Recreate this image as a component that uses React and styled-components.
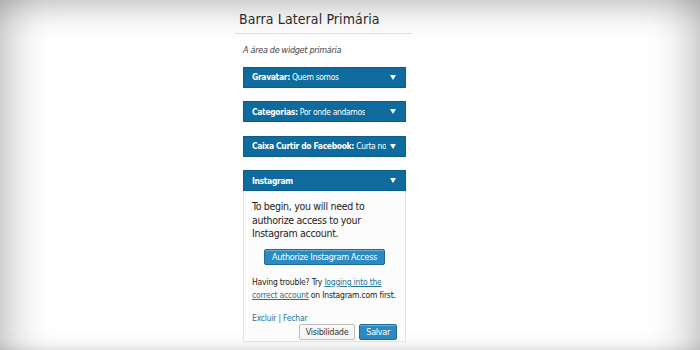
import React from 'react';
import styled, { createGlobalStyle } from 'styled-components';

const GlobalStyle = createGlobalStyle`
    html, body {
        margin: 0;
        padding: 0;
        background: #fff;
    }
    body {
        font-family: "DejaVu Sans Condensed", "DejaVu Sans", sans-serif;
        font-stretch: condensed;
    }
`;

const Page = styled.div`
    width: 700px;
    height: 350px;
    overflow: hidden;
    background: #fff;
    display: flex;
    justify-content: center;
    box-shadow: inset 0 26px 30px -14px rgba(0, 0, 0, 0.18),
        inset 36px 0 40px -24px rgba(0, 0, 0, 0.22),
        inset -36px 0 40px -24px rgba(0, 0, 0, 0.22),
        inset 0 -12px 12px -10px rgba(0, 0, 0, 0.08);
`;

const Sidebar = styled.div`
    width: 177px;
    margin-right: 53px;
    display: flex;
    flex-direction: column;
`;

const SidebarHeader = styled.div`
    height: 34px;
    padding: 0 4px 6px;
    display: flex;
    align-items: flex-end;
    box-sizing: border-box;
    border-bottom: 1px solid #dcdcdc;
    font-size: 14px;
    letter-spacing: 0.1px;
    color: #2a2a2a;
`;

const Description = styled.div`
    padding: 11px 8px 0;
    font-size: 9px;
    letter-spacing: -0.3px;
    font-style: italic;
    color: #444;
`;

const WidgetList = styled.div`
    display: flex;
    flex-direction: column;
    gap: 13.5px;
    padding: 11.5px 6px 0 8px;
`;

const Widget = styled.div`
    display: flex;
    flex-direction: column;
`;

const WidgetBar = styled.div`
    height: 21px;
    background: #0f6b9e;
    border: 1px solid #0b5d8a;
    box-sizing: border-box;
    display: flex;
    align-items: center;
    justify-content: space-between;
    gap: 4px;
    padding: 0 9px 0 8px;
    color: #fff;
    font-size: 8.5px;
    letter-spacing: -0.35px;
    white-space: nowrap;
`;

const BarTitle = styled.span`
    overflow: hidden;
    b {
        font-weight: 700;
    }
`;

const Arrow = styled.span`
    width: 0;
    height: 0;
    border-left: 3.5px solid transparent;
    border-right: 3.5px solid transparent;
    border-top: 5px solid #fff;
    flex-shrink: 0;
`;

const WidgetBody = styled.div`
    border: 1px solid #e3e3e3;
    border-top: none;
    background: #fcfcfc;
    padding: 9px 8px 1px 8px;
    display: flex;
    flex-direction: column;
`;

const Intro = styled.p`
    margin: 0;
    font-size: 10.5px;
    letter-spacing: -0.3px;
    line-height: 13.5px;
    color: #222;
`;

const ButtonRow = styled.div`
    display: flex;
    justify-content: ${(p) => p.$align || 'center'};
    gap: 4px;
    margin: ${(p) => p.$margin || '0'};
`;

const Button = styled.button`
    font-family: inherit;
    font-stretch: condensed;
    height: 16px;
    padding: 0 ${(p) => (p.$wide ? '7px' : '6px')};
    font-size: 9px;
    letter-spacing: -0.3px;
    border-radius: 2px;
    cursor: pointer;
    border: 1px solid ${(p) => (p.$primary ? '#1c6b97' : '#bdbdbd')};
    background: ${(p) => (p.$primary ? '#2b8ac2' : '#f7f7f7')};
    color: ${(p) => (p.$primary ? '#fff' : '#333')};
    box-shadow: ${(p) =>
        p.$primary ? 'inset 0 1px 0 rgba(255,255,255,0.3)' : 'inset 0 1px 0 #fff'};
`;

const Help = styled.p`
    margin: 0;
    font-size: 8.5px;
    letter-spacing: -0.2px;
    line-height: 13px;
    color: #222;
    a {
        color: #21759b;
        text-decoration: underline;
    }
`;

const Links = styled.div`
    margin-top: 11px;
    font-size: 8.5px;
    letter-spacing: -0.2px;
    color: #555;
    a {
        color: #21759b;
        text-decoration: none;
    }
`;

const widgets = [
    { label: 'Gravatar:', title: 'Quem somos' },
    { label: 'Categorias:', title: 'Por onde andamos' },
    { label: 'Caixa Curtir do Facebook:', title: 'Curta no' },
];

export default function App() {
    return (
        <Page>
            <GlobalStyle />
            <Sidebar>
                <SidebarHeader>Barra Lateral Primária</SidebarHeader>
                <Description>A área de widget primária</Description>
                <WidgetList>
                    {widgets.map((w) => (
                        <Widget key={w.label}>
                            <WidgetBar>
                                <BarTitle>
                                    <b>{w.label}</b> {w.title}
                                </BarTitle>
                                <Arrow />
                            </WidgetBar>
                        </Widget>
                    ))}
                    <Widget>
                        <WidgetBar>
                            <BarTitle>
                                <b>Instagram</b>
                            </BarTitle>
                            <Arrow />
                        </WidgetBar>
                        <WidgetBody>
                            <Intro>
                                To begin, you will need to
                                <br />
                                authorize access to your
                                <br />
                                Instagram account.
                            </Intro>
                            <ButtonRow $margin="8px 0 11px">
                                <Button $primary $wide>Authorize Instagram Access</Button>
                            </ButtonRow>
                            <Help>
                                Having trouble? Try <a href="#">logging into the</a>
                                <br />
                                <a href="#">correct account</a> on Instagram.com first.
                            </Help>
                            <Links>
                                <a href="#">Excluir</a> | <a href="#">Fechar</a>
                            </Links>
                            <ButtonRow $align="flex-end" $margin="1px 0 0">
                                <Button>Visibilidade</Button>
                                <Button $primary>Salvar</Button>
                            </ButtonRow>
                        </WidgetBody>
                    </Widget>
                </WidgetList>
            </Sidebar>
        </Page>
    );
}
